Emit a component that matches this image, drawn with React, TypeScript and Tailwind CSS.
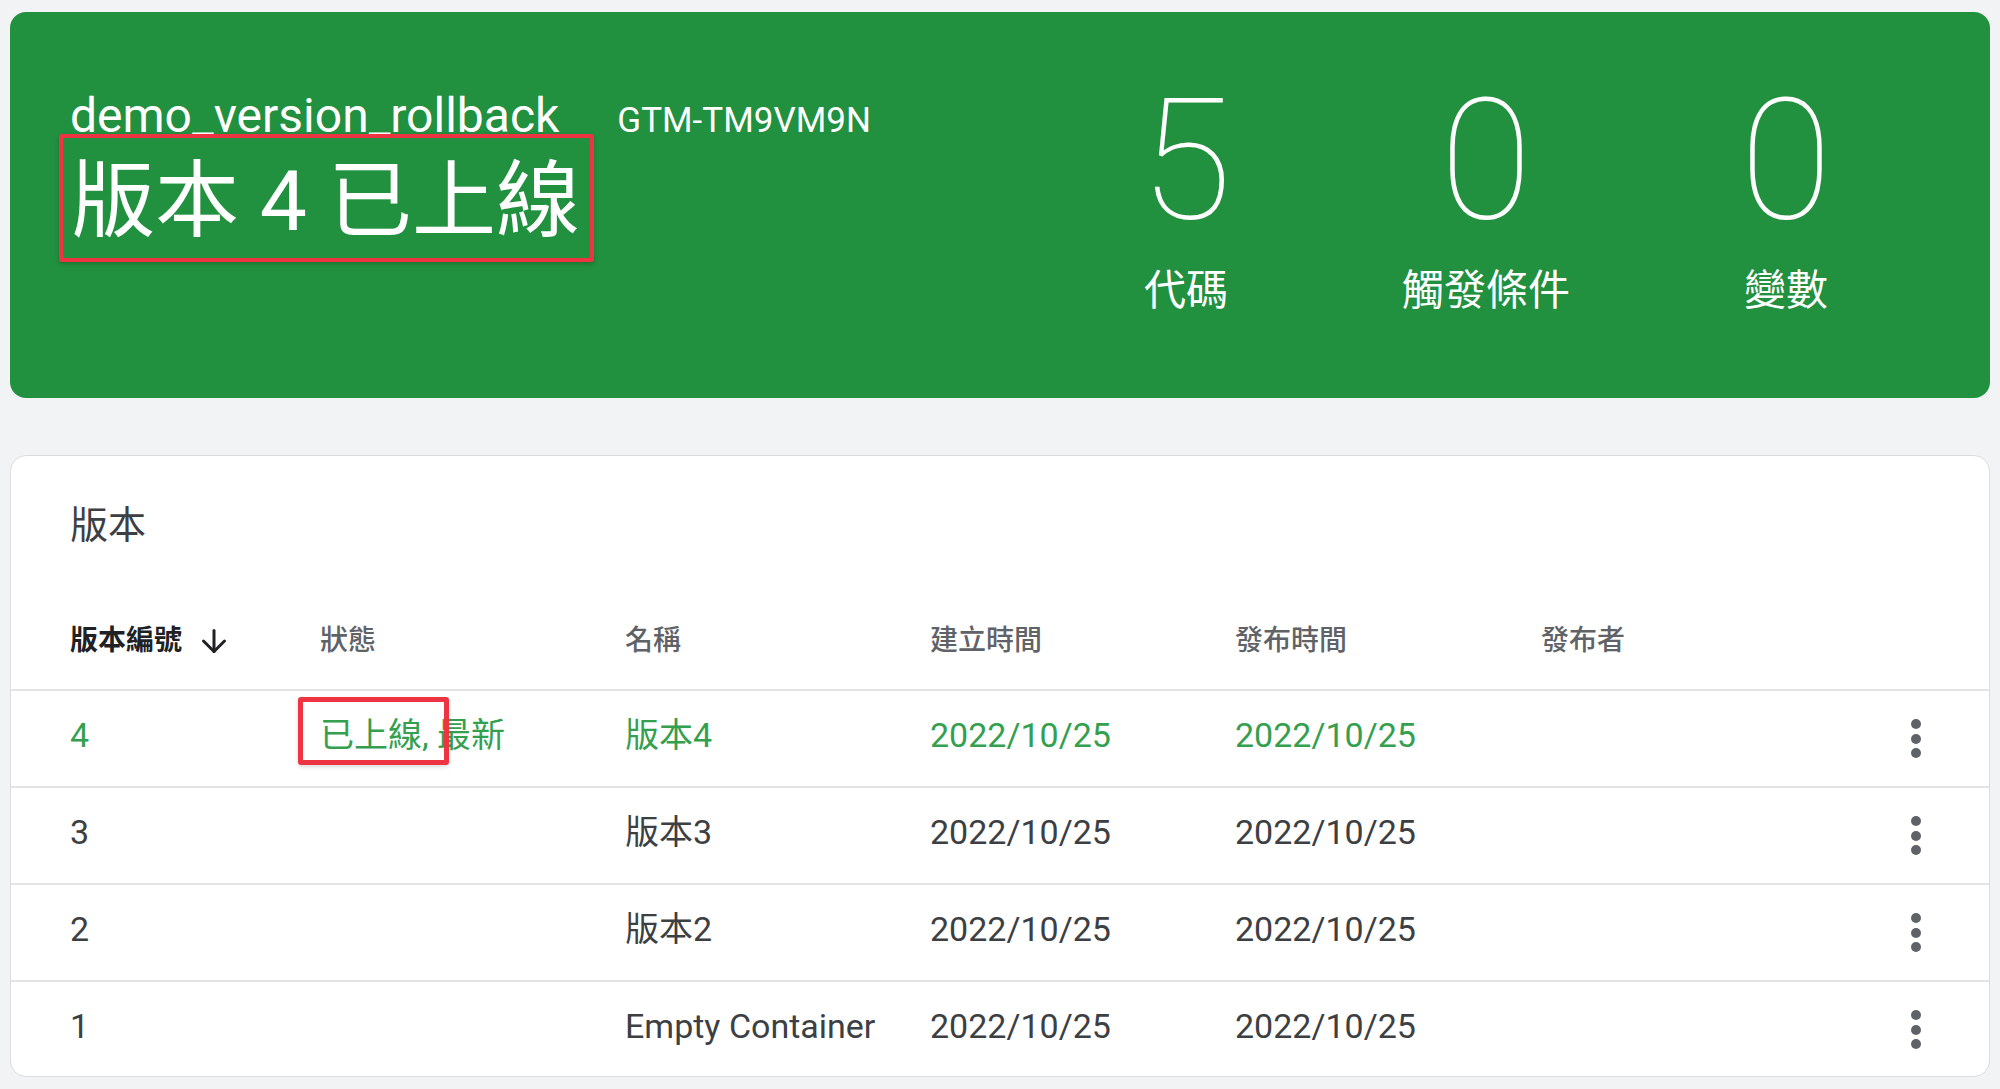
import { ArrowDown } from "lucide-react";

const stats = [
  { value: "5", label: "代碼" },
  { value: "0", label: "觸發條件" },
  { value: "0", label: "變數" },
];

const versions = [
  { id: "4", status: "已上線, 最新", name: "版本4", created: "2022/10/25", published: "2022/10/25", live: true },
  { id: "3", status: "", name: "版本3", created: "2022/10/25", published: "2022/10/25", live: false },
  { id: "2", status: "", name: "版本2", created: "2022/10/25", published: "2022/10/25", live: false },
  { id: "1", status: "", name: "Empty Container", created: "2022/10/25", published: "2022/10/25", live: false },
];

function MoreVert() {
  return (
    <div className="flex flex-col items-center gap-[4.5px]">
      <span className="w-[10px] h-[10px] rounded-full bg-[#5f6368]" />
      <span className="w-[10px] h-[10px] rounded-full bg-[#5f6368]" />
      <span className="w-[10px] h-[10px] rounded-full bg-[#5f6368]" />
    </div>
  );
}

export default function App() {
  return (
    <div className="min-h-screen bg-[#f1f3f4] px-[10px] pt-[12px] pb-4 font-[Roboto,'Noto_Sans_CJK_TC',sans-serif]">
      {/* live version header */}
      <section className="h-[386px] rounded-2xl bg-[#21903f] text-white flex justify-between pl-[60px] pr-[54px]">
        <div className="pt-[80px]">
          <div className="flex items-baseline gap-[58px]">
            <span className="text-[48px] leading-none">demo_version_rollback</span>
            <span className="text-[35px] leading-none">GTM-TM9VM9N</span>
          </div>
          <div className="-ml-[11px] -mt-[6px] inline-block border-4 border-[#ee3342] rounded-[3px] pl-[8px] pr-[10px] pt-[16px] pb-[9px] shadow-[0_2px_4px_rgba(0,0,0,0.2)]">
            <h1 className="text-[84px] leading-[95px] font-normal whitespace-nowrap">版本 4 已上線</h1>
          </div>
        </div>
        <div className="flex pt-[65px]">
          {stats.map((s, i) => (
            <div key={i} className="w-[300px] flex flex-col items-center">
              <span className="text-[168px] leading-none font-thin">{s.value}</span>
              <span className="mt-[25px] text-[42px] leading-none font-normal">{s.label}</span>
            </div>
          ))}
        </div>
      </section>

      {/* versions table */}
      <section className="mt-[57px] h-[622px] rounded-2xl bg-white border border-[#dadce0] overflow-hidden">
        <h2 className="pl-[59px] pt-[50px] text-[38px] leading-none text-[#3c4043]">版本</h2>

        <div className="mt-[49px] h-[96px] flex items-center pl-[59px] pr-[68px] text-[28px] font-medium text-[#5f6368]">
          <div className="w-[250px] flex items-center text-[#202124] font-bold">
            版本編號
            <ArrowDown size={36} strokeWidth={2} className="ml-[14px]" />
          </div>
          <div className="w-[305px]">狀態</div>
          <div className="w-[305px]">名稱</div>
          <div className="w-[305px]">建立時間</div>
          <div className="w-[306px]">發布時間</div>
          <div className="flex-1">發布者</div>
        </div>

        {versions.map((v) => (
          <div
            key={v.id}
            className={`h-[97px] border-t-2 border-[#e3e3e3] flex items-center pl-[59px] pr-[68px] text-[34px] leading-none ${
              v.live ? "text-[#34a04f]" : "text-[#3c4043]"
            }`}
          >
            <div className="flex-1 flex items-center pb-[8px]">
              <div className="w-[250px]">{v.id}</div>
              <div className="w-[305px] relative whitespace-nowrap">
                {v.status}
                {v.live && (
                  <div className="absolute -left-[22px] -top-[21px] w-[151px] h-[68px] border-[5px] border-[#ee3342] rounded-[3px] shadow-[0_2px_4px_rgba(0,0,0,0.15)]" />
                )}
              </div>
              <div className="w-[305px] whitespace-nowrap">{v.name}</div>
              <div className="w-[305px]">{v.created}</div>
              <div className="w-[306px]">{v.published}</div>
            </div>
            <MoreVert />
          </div>
        ))}
      </section>
    </div>
  );
}
